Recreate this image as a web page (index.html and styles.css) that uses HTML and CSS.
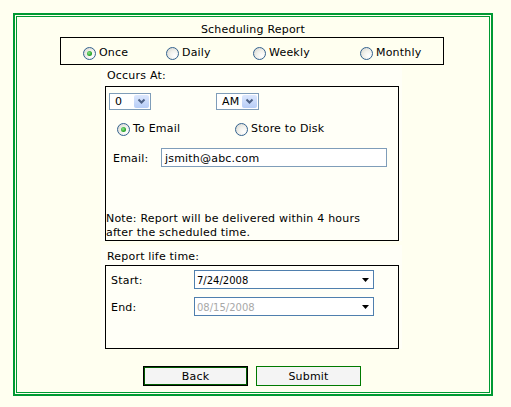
FILE: index.html
```html
<!DOCTYPE html>
<html>
<head>
<meta charset="utf-8">
<title>Scheduling Report</title>
<link rel="stylesheet" href="styles.css">
</head>
<body>
<div class="frame">
  <div class="inner">
    <div class="title">Scheduling Report</div>
    <div class="freq">
      <label class="opt"><span class="rb on"></span>Once</label>
      <label class="opt"><span class="rb"></span>Daily</label>
      <label class="opt"><span class="rb"></span>Weekly</label>
      <label class="opt"><span class="rb"></span>Monthly</label>
    </div>
    <div class="col col1">
      <div class="lbl">Occurs At:</div>
      <div class="box occurs">
        <div class="selrow">
          <div class="sel s1"><span class="seltxt">0</span><span class="selbtn"><svg width="15" height="13" viewBox="0 0 15 13"><path d="M4.5 4.5 L7.5 7.5 L10.5 4.5" fill="none" stroke="#4d6185" stroke-width="2"/></svg></span></div>
          <div class="sel s2"><span class="seltxt">AM</span><span class="selbtn"><svg width="15" height="13" viewBox="0 0 15 13"><path d="M4.5 4.5 L7.5 7.5 L10.5 4.5" fill="none" stroke="#4d6185" stroke-width="2"/></svg></span></div>
        </div>
        <div class="dest">
          <label class="opt"><span class="rb on"></span>To Email</label>
          <label class="opt"><span class="rb"></span>Store to Disk</label>
        </div>
        <div class="emailrow">
          <span class="elbl">Email:</span>
          <div class="text">jsmith@abc.com</div>
        </div>
        <div class="note">Note: Report will be delivered within 4 hours<br>after the scheduled time.</div>
      </div>
    </div>
    <div class="col col2">
      <div class="lbl lbl2">Report life time:</div>
      <div class="box life">
        <span class="dlbl">Start:</span>
        <div class="date"><span>7/24/2008</span><svg width="7" height="4" viewBox="0 0 7 4"><polygon points="0,0 7,0 3.5,4" fill="#000"/></svg></div>
        <span class="dlbl">End:</span>
        <div class="date off"><span>08/15/2008</span><svg width="7" height="4" viewBox="0 0 7 4"><polygon points="0,0 7,0 3.5,4" fill="#000"/></svg></div>
      </div>
    </div>
    <div class="btns">
      <button class="btn back">Back</button>
      <button class="btn">Submit</button>
    </div>
  </div>
</div>
</body>
</html>
```
FILE: styles.css
```css
* { box-sizing: border-box; }
body {
  margin: 0;
  background: #FFFFF0;
  font-family: "DejaVu Sans", Verdana, sans-serif;
  font-size: 11px;
  letter-spacing: 0.2px;
  color: #000;
}
.frame {
  margin: 13px;
  width: 480px;
  height: 383px;
  border: 2px solid #009933;
  padding: 1px;
}
.inner {
  border: 1px solid #009933;
  height: 100%;
  display: flex;
  flex-direction: column;
  align-items: flex-start;
}
.title {
  width: 100%;
  text-align: center;
  margin-top: 6px;
  line-height: 14px;
  height: 14px;
}
.freq {
  margin-left: 43px;
  width: 384px;
  height: 28px;
  border: 1px solid #000;
  display: grid;
  grid-template-columns: 83px 87px 107px 1fr;
  padding: 8px 0 0 22px;
}
.opt {
  display: flex;
  align-items: center;
  gap: 3px;
  line-height: 14px;
  height: 14px;
  white-space: nowrap;
}
.rb {
  flex: none;
  position: relative;
  width: 13px;
  height: 13px;
  border-radius: 50%;
  border: 1px solid #33628f;
  background: radial-gradient(circle at 70% 70%, #ffffff 0%, #f1f1ec 45%, #d2d2cb 100%);
}
.rb.on::after {
  content: "";
  position: absolute;
  left: 3px;
  top: 3px;
  width: 5px;
  height: 5px;
  border-radius: 50%;
  background: radial-gradient(circle at 40% 40%, #8ee68e 0%, #2aa52a 60%, #1b8a1b 100%);
}
.col {
  margin-left: 84px;
  width: 301px;
  background: #FFFFF7;
  display: flex;
  flex-direction: column;
}
.col1 { height: 176px; }
.col2 { height: 104px; margin-top: 4px; }
.lbl {
  height: 21px;
  line-height: 14px;
  padding: 4px 0 0 6px;
}
.lbl2 { height: 20px; padding-top: 5px; }
.box {
  margin-left: 4px;
  width: 294px;
  border: 1px solid #000;
}
.occurs {
  height: 155px;
  display: flex;
  flex-direction: column;
  padding-top: 6px;
}
.selrow {
  display: flex;
  gap: 65px;
  padding-left: 3px;
}
.sel {
  height: 17px;
  border: 1px solid #7F9DB9;
  background: #fff;
  padding: 1px;
  display: flex;
  justify-content: space-between;
}
.s1 { width: 42px; }
.s2 { width: 43px; }
.seltxt {
  padding-left: 4px;
  line-height: 13px;
}
.s2 .seltxt { padding-left: 4px; }
.selbtn {
  width: 15px;
  height: 13px;
  border-radius: 2px;
  background: linear-gradient(#dce7fd, #b7cdf7);
  display: block;
}
.selbtn svg { display: block; }
.dest {
  margin-top: 12px;
  display: grid;
  grid-template-columns: 118px 1fr;
  padding-left: 11px;
}
.emailrow {
  margin-top: 12px;
  display: flex;
  align-items: baseline;
  padding-left: 7px;
}
.elbl { width: 48px; line-height: 15px; }
.text {
  width: 226px;
  height: 19px;
  border: 1px solid #7F9DB9;
  background: #fff;
  padding: 2px 3px 0;
  line-height: 15px;
}
.note {
  margin-top: auto;
  line-height: 14px;
}
.life {
  height: 84px;
  display: grid;
  grid-template-columns: 83px 180px;
  grid-auto-rows: 19px;
  row-gap: 8px;
  align-items: baseline;
  padding: 4px 0 0 5px;
}
.dlbl { line-height: 14px; }
.date {
  height: 19px;
  border: 1px solid #4f7fae;
  background: #fff;
  display: flex;
  justify-content: space-between;
  align-items: center;
  padding: 0 4px 0 2px;
  font-size: 10px;
  letter-spacing: 0;
}
.date span { line-height: 14px; padding-top: 2px; }
.date svg { display: block; }
.date.off span { color: #a8a8a8; }
.btns {
  margin-top: 17px;
  margin-left: 126px;
  display: flex;
  gap: 8px;
}
.btn {
  width: 105px;
  height: 20px;
  background: #F4F4F4;
  border: 1px solid #007a00;
  font-family: "DejaVu Sans", Verdana, sans-serif;
  font-size: 11px;
  letter-spacing: 0.2px;
  color: #000;
  padding: 0;
  margin: 0;
}
.btn.back {
  border: 1px solid #000;
  box-shadow: inset 0 0 0 1px #005a00;
}
```
